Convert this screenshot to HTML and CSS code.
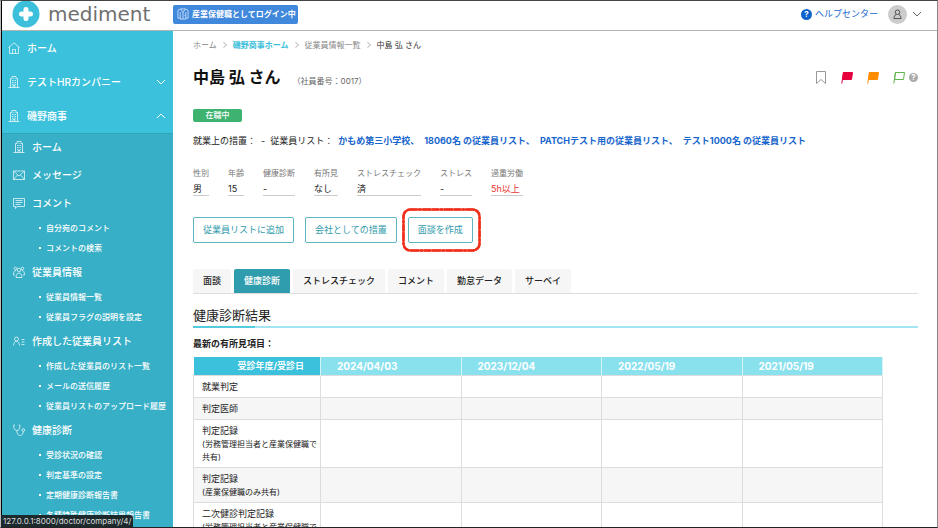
FILE: index.html
```html
<!DOCTYPE html>
<html lang="ja">
<head>
  <meta charset="UTF-8" />
  <meta name="viewport" content="width=device-width, initial-scale=1.0" />
  <title>mediment</title>
  <link rel="stylesheet" href="styles.css">
</head>
<body>
  <!-- Shared icons -->
  <svg class="sprite" aria-hidden="true">
    <symbol id="i-building" viewBox="0 0 12 12">
      <path d="M2.500 11.500V2.500h1.500v-2h4v2h1.500v9M.5 11.500h11M5 11.500v-2h2v2M4 4.500h1.500M6.500 4.500h1.500M4 6.500h1.500M6.500 6.500h1.500M4 8.300h1.500M6.500 8.300h1.500M5.500 2.500h1" />
    </symbol>
    <symbol id="i-chevron" viewBox="0 0 10 6">
      <path d="M1 1l4 4 4-4" />
    </symbol>
    <symbol id="i-flag" viewBox="0 0 12 13">
      <path d="M2.500 1.500h9l-1 7h-9z" />
      <path d="M2.500 1L.8 12.500" />
    </symbol>
  </svg>

  <div class="app">
    <header class="header">
      <a href="#" class="logo">
        <svg class="logo-mark" viewBox="0 0 28 28">
          <circle cx="14" cy="14" r="13.500" fill="#3bbfda" stroke="none" />
          <path d="M14 9.500v9M9.500 14h9" stroke="#fff" stroke-width="5" stroke-linecap="round" />
        </svg>
        <span class="logo-text">mediment</span>
      </a>
      <span class="login-badge">
        <svg class="icon" viewBox="0 0 13 13">
          <path d="M4 1h5l3 1.500v8.500H9.500M4 1L1 2.500v8.500h2.500M3.500 4.500v7.500h6V4.500M4 1l2.500 4L9 1M6.500 5v7M8 8h1" />
        </svg>
        産業保健職としてログイン中
      </span>
      <div class="header-right">
        <a href="#" class="help">
          <span class="help-mark">?</span>
          ヘルプセンター
        </a>
        <button class="account" aria-label="アカウント">
          <span class="avatar">
            <svg viewBox="0 0 10 12">
              <circle cx="5" cy="3.500" r="2.500" />
              <path d="M3.500 5.800C1.800 7 1.200 8.500 1 10.500h8C8.800 8.500 8.200 7 6.500 5.800" />
            </svg>
          </span>
          <svg class="chevron"><use href="#i-chevron" /></svg>
        </button>
      </div>
    </header>

    <div class="body">
      <nav class="sidebar">
        <a href="#" class="nav-top">
          <svg class="icon" viewBox="0 0 12 12"><path d="M.5 5.500L6 .8l5.500 4.700M1.500 5v6.500h9V5M4.500 11.500V7.500h3v4" /></svg>
          ホーム
        </a>
        <a href="#" class="nav-top">
          <svg class="icon"><use href="#i-building" /></svg>
          テストHRカンパニー
          <svg class="chevron"><use href="#i-chevron" /></svg>
        </a>
        <a href="#" class="nav-top open">
          <svg class="icon"><use href="#i-building" /></svg>
          磯野商事
          <svg class="chevron"><use href="#i-chevron" /></svg>
        </a>
        <div class="submenu">
          <a href="#" class="nav-group">
            <svg class="icon"><use href="#i-building" /></svg>
            ホーム
          </a>
          <a href="#" class="nav-group">
            <svg class="icon" viewBox="0 0 12 12"><path d="M.5 2h11v8.500H.5zM.5 2L6 7l5.500-5M.5 10.500l4-4.500M11.500 10.500l-4-4.500" /></svg>
            メッセージ
          </a>
          <a href="#" class="nav-group">
            <svg class="icon" viewBox="0 0 12 12"><path d="M.5 1.500h11v8H4L2.500 11.500v-2h-2zM2.500 3.500h7M2.500 5.500h7M2.500 7.500h5" /></svg>
            コメント
          </a>
          <ul>
            <li><a href="#">自分宛のコメント</a></li>
            <li><a href="#">コメントの検索</a></li>
          </ul>
          <a href="#" class="nav-group">
            <svg class="icon" viewBox="0 0 12 12"><circle cx="6" cy="4" r="1.800" /><circle cx="2.500" cy="2.500" r="1.300" /><circle cx="9.500" cy="2.500" r="1.300" /><path d="M3 11.500c0-6 6-6 6 0zM.5 9c0-3 .8-4.500 2.500-4.500M11.500 9c0-3-.8-4.500-2.500-4.500M.5 9h1.500M10 9h1.500" /></svg>
            従業員情報
          </a>
          <ul>
            <li><a href="#">従業員情報一覧</a></li>
            <li><a href="#">従業員フラグの説明を設定</a></li>
          </ul>
          <a href="#" class="nav-group">
            <svg class="icon" viewBox="0 0 12 12"><circle cx="3.500" cy="4" r="2" /><path d="M.5 10.500c0-5.500 6-5.500 6 0M8.500 4.500h3M8.500 7h3M8.500 9.500h3" /></svg>
            作成した従業員リスト
          </a>
          <ul>
            <li><a href="#">作成した従業員のリスト一覧</a></li>
            <li><a href="#">メールの送信履歴</a></li>
            <li><a href="#">従業員リストのアップロード履歴</a></li>
          </ul>
          <a href="#" class="nav-group">
            <svg class="icon" viewBox="0 0 12 12"><path d="M2 1H.8C.3 4 1.500 6.500 3.800 6.500S7.300 4 6.800 1H5.600M3.800 6.500c0 6.500 6.500 6.500 6.500 1" /><circle cx="10.300" cy="6" r="1.300" /></svg>
            健康診断
          </a>
          <ul>
            <li><a href="#">受診状況の確認</a></li>
            <li><a href="#">判定基準の設定</a></li>
            <li><a href="#">定期健康診断報告書</a></li>
            <li><a href="#">各種特殊健康診断結果報告書</a></li>
          </ul>
        </div>
      </nav>

      <main class="main">
        <div class="breadcrumb">
          <a href="#">ホーム</a>
          <svg class="sep" viewBox="0 0 4 6"><path d="M.5.5L3.500 3 .5 5.500" /></svg>
          <a href="#" class="current-company">磯野商事ホーム</a>
          <svg class="sep" viewBox="0 0 4 6"><path d="M.5.5L3.500 3 .5 5.500" /></svg>
          <a href="#">従業員情報一覧</a>
          <svg class="sep" viewBox="0 0 4 6"><path d="M.5.5L3.500 3 .5 5.500" /></svg>
          <span class="here">中島 弘 さん</span>
        </div>

        <div class="title-row">
          <h1>中島 弘 さん</h1>
          <span class="employee-no">（社員番号：0017）</span>
          <div class="marks">
            <button class="mark bookmark" aria-label="ブックマーク">
              <svg viewBox="0 0 12 13"><path d="M1.500.5h9v12L6 8.500l-4.500 4z" /></svg>
            </button>
            <button class="mark flag-red" aria-label="赤フラグ"><svg><use href="#i-flag" /></svg></button>
            <button class="mark flag-orange" aria-label="橙フラグ"><svg><use href="#i-flag" /></svg></button>
            <div class="mark-help">
              <button class="mark flag-green" aria-label="緑フラグ"><svg><use href="#i-flag" /></svg></button>
              <span class="help-mark gray">?</span>
            </div>
          </div>
        </div>

        <span class="status">在職中</span>

        <div class="lists">
          <span>就業上の措置：</span>
          <span>-</span>
          <span>従業員リスト：</span>
          <span class="list-links">
            <a href="#">かもめ第三小学校、</a>
            <a href="#">18060名 の従業員リスト、</a>
            <a href="#">PATCHテスト用の従業員リスト、</a>
            <a href="#">テスト1000名 の従業員リスト</a>
          </span>
        </div>

        <dl class="facts">
          <div><dt>性別</dt><dd>男</dd></div>
          <div><dt>年齢</dt><dd>15</dd></div>
          <div><dt>健康診断</dt><dd>-</dd></div>
          <div><dt>有所見</dt><dd>なし</dd></div>
          <div><dt>ストレスチェック</dt><dd>済</dd></div>
          <div><dt>ストレス</dt><dd>-</dd></div>
          <div><dt>過重労働</dt><dd class="warn">5h以上</dd></div>
        </dl>

        <div class="actions">
          <button class="btn">従業員リストに追加</button>
          <button class="btn">会社としての措置</button>
          <div class="highlighted">
            <button class="btn">面談を作成</button>
            <!-- Hand-drawn ring around the button -->
            <svg class="ring" viewBox="0 0 80 44" preserveAspectRatio="none">
              <rect class="ring-line" x="1.500" y="1.500" width="77" height="41" rx="7" />
              <rect class="ring-rough" x="1.500" y="1.500" width="77" height="41" rx="7" />
            </svg>
          </div>
        </div>

        <div class="tabs">
          <button class="tab">面談</button>
          <button class="tab active">健康診断</button>
          <button class="tab">ストレスチェック</button>
          <button class="tab">コメント</button>
          <button class="tab">勤怠データ</button>
          <button class="tab">サーベイ</button>
        </div>

        <h2>健康診断結果</h2>
        <p class="findings">最新の有所見項目：</p>

        <table class="results">
          <thead>
            <tr>
              <th class="first">受診年度/受診日</th>
              <th>2024/04/03</th>
              <th>2023/12/04</th>
              <th>2022/05/19</th>
              <th>2021/05/19</th>
            </tr>
          </thead>
          <tbody>
            <tr><td>就業判定</td><td></td><td></td><td></td><td></td></tr>
            <tr><td>判定医師</td><td></td><td></td><td></td><td></td></tr>
            <tr><td>判定記録<small>(労務管理担当者と産業保健職で共有)</small></td><td></td><td></td><td></td><td></td></tr>
            <tr><td>判定記録<small>(産業保健職のみ共有)</small></td><td></td><td></td><td></td><td></td></tr>
            <tr><td>二次健診判定記録<small>(労務管理担当者と産業保健職で共有)</small></td><td></td><td></td><td></td><td></td></tr>
          </tbody>
        </table>
      </main>
    </div>
  </div>

  <div class="url-hint">127.0.0.1:8000/doctor/company/4/</div>
</body>
</html>
```

FILE: styles.css
```css
* {
  margin: 0;
  padding: 0;
  box-sizing: border-box;
}

body {
  height: 100vh;
  overflow: hidden;
  border: 1px solid #bbb;
  border-top-color: #444;
  border-right-color: #888;
  border-bottom-color: #222;
  background: #fff;
  color: #222;
  font-family: Inter, "Noto Sans CJK JP", sans-serif;
  font-size: 9px;
  line-height: 14px;
}

a {
  color: inherit;
  text-decoration: none;
}

button {
  border: none;
  background: none;
  color: inherit;
  font: inherit;
  cursor: pointer;
}

svg {
  display: block;
  fill: none;
  stroke: currentColor;
}

.sprite {
  position: absolute;
  width: 0;
  height: 0;
}

.icon {
  width: 12px;
  height: 12px;
  flex: none;
  stroke-width: 0.7;
}

.chevron {
  width: 10px;
  height: 6px;
}

.app {
  display: flex;
  flex-direction: column;
  height: 100%;
  border-left: 1px solid #000;
}

/* Header */
.header {
  display: flex;
  align-items: center;
  flex: none;
  height: 30px;
  padding: 0 15px 3px 10px;
  border-bottom: 1px solid #b4b4b4;
}

.logo {
  display: flex;
  align-items: center;
  gap: 8px;
  width: 161px;
}

.logo-mark {
  width: 28px;
  height: 28px;
}

.logo-text {
  color: #707070;
  font-family: "DejaVu Sans", sans-serif;
  font-size: 20px;
  line-height: 26px;
}

.login-badge {
  display: flex;
  align-items: center;
  gap: 3px;
  height: 19px;
  padding: 0 2px 0 4px;
  border-radius: 2px;
  background: #4088dc;
  color: #fff;
  font-size: 8px;
  font-weight: bold;
}

.header-right {
  display: flex;
  align-items: center;
  gap: 10px;
  margin-left: auto;
}

.help {
  display: flex;
  align-items: center;
  gap: 3px;
  color: #1766cc;
}

.help-mark {
  width: 11px;
  height: 11px;
  border-radius: 50%;
  background: #0e62cc;
  color: #fff;
  font-size: 8px;
  font-weight: bold;
  line-height: 11px;
  text-align: center;
}

.help-mark.gray {
  width: 9px;
  height: 9px;
  background: #aaa;
  line-height: 9px;
}

.account {
  display: flex;
  align-items: center;
  gap: 5px;
  color: #666;
}

.avatar {
  display: grid;
  place-items: center;
  width: 19px;
  height: 19px;
  border-radius: 50%;
  background: #ccc;
  color: #444;
}

.avatar svg {
  width: 9px;
  height: 11px;
}

/* Sidebar */
.body {
  display: flex;
  flex: 1;
  min-height: 0;
}

.sidebar {
  display: flex;
  flex-direction: column;
  flex: none;
  width: 171px;
  overflow: hidden;
  background: #3bc1db;
  color: #fff;
  font-weight: 500;
}

.nav-top {
  display: flex;
  align-items: center;
  flex: none;
  gap: 7px;
  height: 34px;
  padding: 0 7px 0 6px;
  font-size: 10px;
}

.nav-top .chevron {
  margin-left: auto;
}

.nav-top.open .chevron {
  transform: rotate(180deg);
}

.submenu {
  flex: 1 0 auto;
  background: #37afc6;
  box-shadow: inset 0 1px #34a5bb;
}

.nav-group {
  display: flex;
  align-items: center;
  gap: 7px;
  height: 28px;
  padding-left: 11px;
  font-size: 10px;
}

.submenu ul {
  padding: 1px 0 0 37px;
  list-style: none;
}

.submenu li {
  display: flex;
  align-items: center;
  gap: 5px;
  height: 20px;
  font-size: 8px;
  white-space: nowrap;
}

.submenu li::before {
  content: "";
  width: 2px;
  height: 2px;
  background: #fff;
}

/* Main column */
.main {
  flex: 1;
  min-width: 0;
  overflow: hidden;
  padding: 7px 19px 0 20px;
}

.breadcrumb {
  display: flex;
  align-items: center;
  gap: 6px;
  color: #888;
  font-size: 8px;
}

.sep {
  width: 4px;
  height: 6px;
  stroke-width: 0.7;
}

.current-company {
  color: #3bbfda;
  font-weight: bold;
}

.here {
  color: #333;
}

.title-row {
  display: flex;
  align-items: center;
  gap: 12px;
  margin-top: 13px;
  height: 24px;
}

h1 {
  color: #111;
  font-size: 16px;
  line-height: 24px;
}

.employee-no {
  padding-top: 7px;
  color: #666;
  font-size: 8px;
}

.marks {
  display: flex;
  align-items: center;
  gap: 14px;
  margin-left: auto;
}

.mark svg {
  width: 12px;
  height: 13px;
}

.bookmark {
  color: #999;
}

.flag-red {
  color: #e6003c;
}

.flag-orange {
  color: #ff8c00;
}

.flag-green {
  color: #5fb548;
}

.flag-red svg,
.flag-orange svg {
  fill: currentColor;
}

.mark-help {
  display: flex;
  align-items: center;
  gap: 4px;
}

.status {
  display: block;
  width: 49px;
  margin-top: 20px;
  border-radius: 2px;
  background: #3eb370;
  color: #fff;
  font-size: 8px;
  font-weight: 500;
  line-height: 13px;
  text-align: center;
}

.lists {
  display: flex;
  gap: 5px;
  margin-top: 12px;
  white-space: nowrap;
}

.list-links {
  display: flex;
  gap: 5px;
  color: #1766cc;
  font-weight: bold;
}

.facts {
  display: flex;
  gap: 19px;
  margin-top: 18px;
}

.facts dt {
  color: #777;
  font-size: 8px;
}

.facts dd {
  margin-top: 2px;
  border-bottom: 1px solid #ccc;
  line-height: 13px;
}

.facts .warn {
  color: #e8352b;
}

.actions {
  display: flex;
  gap: 11px;
  margin-top: 21px;
}

.btn {
  height: 26px;
  padding: 0 9px;
  border: 1px solid #5fb4c3;
  border-radius: 2px;
  background: #fff;
  color: #2f9aab;
}

.highlighted {
  position: relative;
}

.ring {
  position: absolute;
  top: -9px;
  left: -6px;
  width: calc(100% + 14px);
  height: 44px;
  pointer-events: none;
}

.ring-line {
  stroke: #f0301c;
  stroke-width: 2;
}

.ring-rough {
  stroke: #f0301c;
  stroke-width: 2.6;
  stroke-dasharray: 7 1 3 1 9 1;
}

.tabs {
  display: flex;
  gap: 3px;
  margin-top: 26px;
  border-bottom: 1px solid #ddd;
}

.tab {
  height: 24px;
  padding: 0 10px;
  border-radius: 2px 2px 0 0;
  background: #f6f6f6;
  font-weight: 500;
}

.tab.active {
  background: #2f9dad;
  color: #fff;
}

h2 {
  margin-top: 11px;
  border-bottom: 2px solid;
  border-image: linear-gradient(to right, #55cbdf 64px, #a3e5f0 64px) 2;
  font-size: 13px;
  font-weight: normal;
  line-height: 21px;
}

.findings {
  margin-top: 9px;
  font-weight: bold;
}

/* Results table */
.results {
  width: calc(100% - 35px);
  margin-top: 6px;
  border-collapse: collapse;
  table-layout: fixed;
}

.results th {
  height: 18px;
  padding-left: 16px;
  border-right: 1px solid #d5f4f8;
  background: #8ae1ee;
  color: #fff;
  font-size: 10px;
  text-align: left;
}

.results .first {
  width: 127px;
  padding-right: 16px;
  background: #3bc1db;
  font-size: 9px;
  text-align: right;
}

.results td {
  padding: 4px 1px 3px 8px;
  border: 1px solid #ddd;
  vertical-align: top;
}

.results tbody tr:nth-child(even) {
  background: #f6f6f6;
}

.results small {
  display: block;
  font-size: 8px;
  line-height: 13px;
}

/* Link target shown in the corner */
.url-hint {
  position: fixed;
  bottom: 1px;
  left: 1px;
  height: 12px;
  padding: 0 2px;
  border-radius: 0 3px 0 0;
  background: #1c2a2d;
  color: #ddd;
  font-size: 8px;
  line-height: 12px;
}
```
